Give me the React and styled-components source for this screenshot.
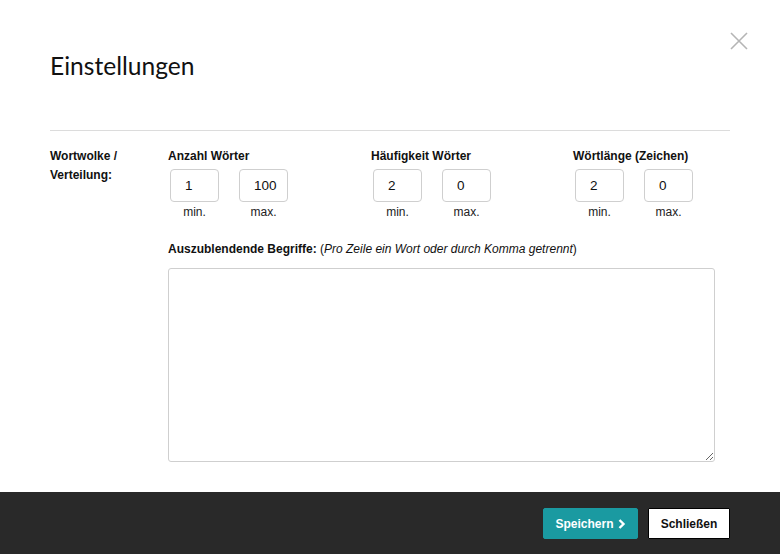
import React from "react";
import styled, { createGlobalStyle } from "styled-components";

const Global = createGlobalStyle`
  html, body { margin: 0; padding: 0; background: #fff; }
  body { font-family: "Liberation Sans", Arial, sans-serif; }
  * { box-sizing: border-box; }
`;

const Modal = styled.div`
  width: 780px;
  height: 554px;
  display: flex;
  flex-direction: column;
  background: #fff;
  position: relative;
`;

const Header = styled.div`
  padding-top: 50px;
  height: 131px;
  border-bottom: 1px solid #dcdcdc;
  margin: 0 50px;
`;

const Title = styled.h1`
  margin: 0;
  font-family: Lato, "Open Sans", sans-serif;
  font-weight: 400;
  font-size: 24.6px;
  line-height: 32px;
  color: #111;
`;

const Close = styled.button`
  position: absolute;
  top: 31px;
  right: 31px;
  width: 20px;
  height: 20px;
  padding: 0;
  border: none;
  background: transparent;
  cursor: pointer;
  display: flex;
  align-items: center;
  justify-content: center;
`;

const Body = styled.div`
  flex: 1;
  display: grid;
  grid-template-columns: 118px 1fr;
  padding: 16px 65px 0 50px;
`;

const SideLabel = styled.div`
  font-size: 12px;
  font-weight: 700;
  line-height: 19px;
  color: #111;
`;

const Main = styled.div`
  display: flex;
  flex-direction: column;
`;

const Groups = styled.div`
  display: grid;
  grid-template-columns: 203px 202px 1fr;
`;

const Group = styled.div`
  display: flex;
  flex-direction: column;
`;

const GroupTitle = styled.div`
  font-size: 12px;
  font-weight: 700;
  line-height: 19px;
  color: #111;
  margin-bottom: 3px;
`;

const Pair = styled.div`
  display: flex;
  gap: 20px;
  padding-left: 2px;
`;

const Field = styled.div`
  display: flex;
  flex-direction: column;
  align-items: center;
  width: 49px;
`;

const NumInput = styled.input`
  width: 49px;
  height: 33px;
  border: 1px solid #cfcfcf;
  border-radius: 4px;
  padding: 0 0 0 14px;
  font-family: "Liberation Sans", Arial, sans-serif;
  font-size: 13.5px;
  color: #111;
  outline: none;
`;

const Sub = styled.div`
  font-size: 12px;
  line-height: 14px;
  color: #222;
  margin-top: 3px;
`;

const ExcludeLabel = styled.div`
  margin-top: 22px;
  font-size: 12px;
  line-height: 16px;
  color: #111;
  b { font-weight: 700; }
  i { font-style: italic; }
`;

const Area = styled.textarea`
  margin-top: 11px;
  width: 547px;
  height: 194px;
  border: 1px solid #cfcfcf;
  border-radius: 3px;
  resize: vertical;
  font-family: "Liberation Sans", Arial, sans-serif;
  font-size: 13px;
  outline: none;
`;

const Footer = styled.div`
  height: 62px;
  background: #292929;
  display: flex;
  justify-content: flex-end;
  align-items: flex-start;
  gap: 10px;
  padding: 16px 50px 0 0;
`;

const Button = styled.button`
  height: 31px;
  width: ${p => (p.$primary ? "95px" : "82px")};
  padding: 0;
  justify-content: center;
  font-family: "Liberation Sans", Arial, sans-serif;
  font-size: 12px;
  font-weight: 700;
  border-radius: ${p => (p.$primary ? "2px" : "1px")};
  border: 1px solid ${p => (p.$primary ? "#1a9aa1" : "#000")};
  background: ${p => (p.$primary ? "#1a9aa1" : "#fff")};
  color: ${p => (p.$primary ? "#fff" : "#111")};
  display: flex;
  align-items: center;
  gap: 4px;
  cursor: pointer;
`;

const groups = [
  { title: "Anzahl Wörter", min: "1", max: "100" },
  { title: "Häufigkeit Wörter", min: "2", max: "0" },
  { title: "Wörtlänge (Zeichen)", min: "2", max: "0" },
];

export default function App() {
  return (
    <>
      <Global />
      <Modal>
        <Header>
          <Title>Einstellungen</Title>
        </Header>
        <Close aria-label="Schließen">
          <svg width="18" height="18" viewBox="0 0 18 18">
            <path d="M1 1 L17 17 M17 1 L1 17" stroke="#b5b5b5" strokeWidth="1.6" />
          </svg>
        </Close>
        <Body>
          <SideLabel>
            Wortwolke /<br />
            Verteilung:
          </SideLabel>
          <Main>
            <Groups>
              {groups.map(g => (
                <Group key={g.title}>
                  <GroupTitle>{g.title}</GroupTitle>
                  <Pair>
                    <Field>
                      <NumInput defaultValue={g.min} />
                      <Sub>min.</Sub>
                    </Field>
                    <Field>
                      <NumInput defaultValue={g.max} />
                      <Sub>max.</Sub>
                    </Field>
                  </Pair>
                </Group>
              ))}
            </Groups>
            <ExcludeLabel>
              <b>Auszublendende Begriffe:</b> (<i>Pro Zeile ein Wort oder durch Komma getrennt</i>)
            </ExcludeLabel>
            <Area />
          </Main>
        </Body>
        <Footer>
          <Button $primary>
            Speichern
            <svg width="8" height="10" viewBox="0 0 8 10">
              <path d="M1.5 1 L5.5 5 L1.5 9" stroke="#fff" strokeWidth="2.4" fill="none" />
            </svg>
          </Button>
          <Button>Schließen</Button>
        </Footer>
      </Modal>
    </>
  );
}
